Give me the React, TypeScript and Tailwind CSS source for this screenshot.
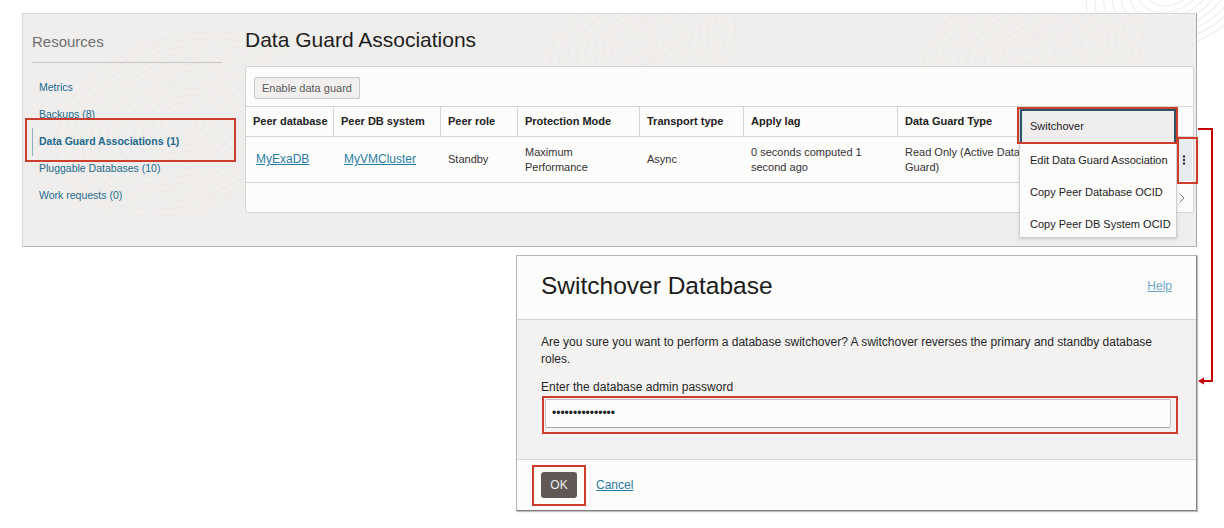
import { MoreVertical, ChevronRight } from "lucide-react";

const links = [
  { label: "Metrics", active: false },
  { label: "Backups (8)", active: false },
  { label: "Data Guard Associations (1)", active: true },
  { label: "Pluggable Databases (10)", active: false },
  { label: "Work requests (0)", active: false },
];

const columns = [
  { label: "Peer database", w: "w-[88px]" },
  { label: "Peer DB system", w: "w-[107px]" },
  { label: "Peer role", w: "w-[77px]" },
  { label: "Protection Mode", w: "w-[122px]" },
  { label: "Transport type", w: "w-[104px]" },
  { label: "Apply lag", w: "w-[154px]" },
  { label: "Data Guard Type", w: "w-[122px]" },
];

const menuItems = ["Edit Data Guard Association", "Copy Peer Database OCID", "Copy Peer DB System OCID"];

// faint swirl texture behind the resources panel
const Swirls = ({ cx, cy, count, color }: { cx: number; cy: number; count: number; color: string }) => {
  return (
    <g fill="none" stroke={color} strokeWidth="1">
      {Array.from({ length: count }).map((_, i) => (
        <ellipse key={i} cx={cx} cy={cy} rx={14 + i * 9} ry={9 + i * 6} transform={`rotate(-18 ${cx} ${cy})`} />
      ))}
    </g>
  );
};

const Sidebar = () => {
  return (
    <div className="relative w-[190px] shrink-0 pt-[18px]">
      <div className="text-[15px] text-[#6f6f6f] leading-[20px] pb-[10px] border-b border-[#c9c7c5]">Resources</div>
      <div className="flex flex-col pt-[11px]">
        {links.map((l) => (
          <div key={l.label} className="relative h-[27px] flex items-center pl-[7px]">
            {l.active && <div className="absolute left-0 top-0 h-[28px] w-px bg-[#8fb0c2]" />}
            <span className={`text-[10.5px] text-[#226a8c] whitespace-nowrap ${l.active ? "font-bold" : ""}`}>{l.label}</span>
          </div>
        ))}
      </div>
    </div>
  );
};

const AssociationsTable = () => {
  return (
    <div className="relative mt-[14px] w-[949px] h-[147px] bg-[#fcfcfb] border border-[#d5d4d2] rounded-[2px]">
      <div className="px-[8px] pt-[8px] h-[39px]">
        <button className="h-[22px] px-[7px] text-[11px] text-[#5a5a5a] bg-[#f1f0ef] border border-[#c8c8c8] rounded-[2px]">
          Enable data guard
        </button>
      </div>
      <div className="flex h-[31px] border-y border-[#d6d6d6]">
        {columns.map((c, i) => (
          <div
            key={c.label}
            className={`${c.w} flex items-center px-[7px] text-[11px] font-bold text-[#222] whitespace-nowrap ${i < columns.length - 1 ? "border-r border-[#d6d6d6]" : ""}`}
          >
            {c.label}
          </div>
        ))}
      </div>
      <div className="flex h-[46px] border-b border-[#d6d6d6] text-[11px] text-[#333] leading-[15px] whitespace-nowrap">
        <div className="w-[88px] flex items-center pl-[10px]">
          <span className="text-[12px] text-[#2a7ba3] underline">MyExaDB</span>
        </div>
        <div className="w-[107px] flex items-center pl-[10px]">
          <span className="text-[12px] text-[#2a7ba3] underline">MyVMCluster</span>
        </div>
        <div className="w-[77px] flex items-center px-[7px]">Standby</div>
        <div className="w-[122px] flex items-center px-[7px]">Maximum<br />Performance</div>
        <div className="w-[104px] flex items-center px-[7px]">Async</div>
        <div className="w-[154px] flex items-center px-[7px]">0 seconds computed 1<br />second ago</div>
        <div className="w-[122px] flex items-center px-[7px]">Read Only (Active Data<br />Guard)</div>
        <div className="flex-1 flex justify-end items-center pr-[1px]">
          <div className="w-[16px] h-[42px] bg-[#e7ecef] flex items-center justify-center">
            <MoreVertical size={12} strokeWidth={3} className="text-[#333]" />
          </div>
        </div>
      </div>
      <div className="flex justify-end items-center h-[30px] pr-[3px]">
        <ChevronRight size={16} strokeWidth={1.5} className="text-[#777]" />
      </div>
    </div>
  );
};

const SwitchoverDialog = () => {
  return (
    <div className="relative ml-[516px] mt-[8px] w-[681px] h-[256px] flex flex-col border border-[#b5b5b5] border-r-[#8a8a8a] border-b-[#7d7d7d] shadow-[1px_1px_1px_rgba(0,0,0,0.25)]">
      <div className="h-[64px] flex items-center justify-between px-[24px] pb-[3px] bg-[#fcfcfb] border-b border-[#d6d5d3]">
        <div className="text-[24.5px] text-[#1b1b1b]">Switchover Database</div>
        <span className="text-[12px] text-[#6ea7c6] underline">Help</span>
      </div>
      <div className="h-[139px] bg-[#f3f2f1] px-[24px] pt-[14px] text-[12px] text-[#262626] leading-[17px]">
        <p>
          Are you sure you want to perform a database switchover? A switchover reverses the primary and standby database roles.
        </p>
        <div className="mt-[11px]">Enter the database admin password</div>
        <div className="ml-[1px] pl-[1px] pt-[1px] pr-[5px] pb-[4px] border-2 border-[#cc3d2c] w-[636px]">
          <div className="h-[29px] bg-[#fcfcfb] border border-[#c4c4c4] border-b-[#a9a9a9] rounded-[2px] flex items-center pl-[6px] text-[12px] text-[#222]">
            •••••••••••••••
          </div>
        </div>
      </div>
      <div className="flex-1 bg-[#fcfcfb] border-t border-[#d9d8d6] flex items-center pl-[15px] gap-[10px]">
        <div className="px-[7px] pt-[5px] pb-[6px] border-2 border-[#cc3d2c]">
          <button className="w-[36px] h-[26px] bg-[#5f5855] rounded-[3px] text-[12px] text-[#eeeeee]">OK</button>
        </div>
        <span className="text-[12px] text-[#2a7ba3] underline">Cancel</span>
      </div>
    </div>
  );
};

const App = () => {
  return (
    <div className="relative w-[1224px] h-[528px] bg-white overflow-hidden" style={{ fontFamily: '"Liberation Sans", Arial, sans-serif' }}>
      {/* faint texture in top-right corner */}
      <svg className="absolute left-[1060px] top-0" width="164" height="60">
        <Swirls cx={110} cy={-10} count={9} color="#ecebea" />
      </svg>

      <div className="relative ml-[22px] mt-[13px] w-[1175px] h-[234px] bg-[#f0eeec] border border-[#d8d6d4] border-r-[#a9a7a5] border-b-[#b8b6b4] flex gap-[23px] pl-[9px] overflow-hidden">
        <svg className="absolute left-0 top-0" width="1175" height="234">
          <Swirls cx={160} cy={110} count={14} color="#ebe9e7" />
          <Swirls cx={620} cy={30} count={10} color="#ebe9e7" />
          <Swirls cx={1010} cy={40} count={12} color="#ebe9e7" />
        </svg>
        <Sidebar />
        <div className="relative flex flex-col">
          <div className="pt-[14px] text-[21px] leading-[24px] text-[#1e1e1e]">Data Guard Associations</div>
          <AssociationsTable />
        </div>
      </div>

      {/* highlight on active sidebar link */}
      <div className="absolute left-[25px] top-[118px] w-[211px] h-[44px] border-2 border-[#cc3d2c]" />

      {/* action menu */}
      <div className="absolute left-[1019px] top-[108px] w-[158px] h-[130px] bg-[#fcfcfb] border border-[#cfcfcf] shadow-[0_1px_3px_rgba(0,0,0,0.15)] text-[11px] text-[#222]">
        <div className="h-[35px] flex items-center pl-[8px] bg-[#efeeed] border-2 border-[#2f5364]">Switchover</div>
        {menuItems.map((m) => (
          <div key={m} className="h-[32px] flex items-center pl-[10px] whitespace-nowrap">{m}</div>
        ))}
      </div>
      <div className="absolute left-[1017px] top-[107px] w-[161px] h-[37px] border-2 border-[#cc3d2c]" />
      <div className="absolute left-[1177px] top-[137px] w-[21px] h-[47px] border-2 border-[#cc3d2c]" />

      {/* connector arrow */}
      <svg className="absolute left-0 top-0" width="1224" height="528">
        <path d="M1198 129 H1212 V381 H1203" fill="none" stroke="#c40000" strokeWidth="2" />
        <path d="M1198 381 L1204 377.5 L1204 384.5 Z" fill="#c40000" />
      </svg>

      <SwitchoverDialog />
    </div>
  );
};

export default App;
